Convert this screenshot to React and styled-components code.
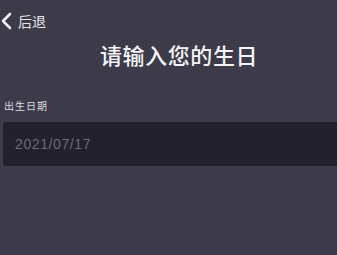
import React from 'react'
import styled, { createGlobalStyle } from 'styled-components'

const Global = createGlobalStyle`
  html, body {
    margin: 0;
    padding: 0;
    background: #3d3a49;
  }
  body {
    font-family: "Noto Sans CJK SC", "Noto Sans", sans-serif;
  }
`

const Page = () => {
  return (
    <Screen>
      <Global />
      <TopBar>
        <Back>
          <svg width="12" height="18" viewBox="0 0 12 18">
            <path d="M10 2 L3 9 L10 16" fill="none" stroke="#f2f2f4" strokeWidth="2.6" strokeLinecap="round" strokeLinejoin="round" />
          </svg>
          <span>后退</span>
        </Back>
      </TopBar>
      <Title>请输入您的生日</Title>
      <Field>
        <Label>出生日期</Label>
        <DateBox>2021/07/17</DateBox>
      </Field>
    </Screen>
  )
}

const Screen = styled.div`
  width: 337px;
  height: 255px;
  background: #3d3a49;
  overflow: hidden;
`
const TopBar = styled.div`
  display: flex;
  align-items: center;
  height: 18px;
  padding: 12px 0 0 0;
`
const Back = styled.div`
  display: flex;
  align-items: center;
  gap: 6px;
  color: #e6e5ea;
  font-size: 14px;
  span{
    line-height: 1;
  }
`
const Title = styled.h1`
  margin: 9px 0 0 0;
  padding-left: 21px;
  text-align: center;
  color: #f4f4f6;
  font-size: 22px;
  font-weight: 500;
  line-height: 30px;
  letter-spacing: 0.6px;
`
const Field = styled.div`
  margin-top: 30px;
  padding-left: 3px;
`
const Label = styled.div`
  padding-left: 1px;
  color: #dedde3;
  font-size: 10px;
  line-height: 13px;
  letter-spacing: 1px;
`
const DateBox = styled.div`
  margin-top: 10px;
  height: 44px;
  display: flex;
  align-items: center;
  padding-left: 12px;
  background: #22212d;
  border-radius: 3px 0 0 3px;
  color: #6c6a78;
  font-family: "Liberation Sans", Arial, sans-serif;
  font-size: 14px;
  letter-spacing: 0.6px;
`

export default Page
